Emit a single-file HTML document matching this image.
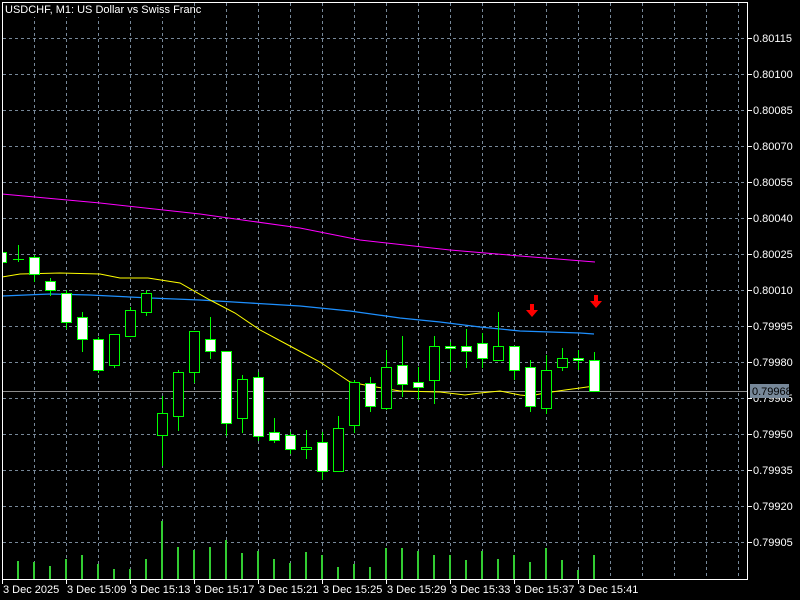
<!DOCTYPE html>
<html><head><meta charset="utf-8"><style>
html,body{margin:0;padding:0;background:#000;width:800px;height:600px;overflow:hidden}
svg{display:block}
text{font-family:"Liberation Sans",sans-serif;font-size:11px;fill:#fff}
</style></head><body>
<svg width="800" height="600" viewBox="0 0 800 600" xmlns="http://www.w3.org/2000/svg">
<rect width="800" height="600" fill="#000"/>
<g stroke="#778899" stroke-width="1" stroke-dasharray="3,3" shape-rendering="crispEdges">
<path d="M34.5 3V579M66.5 3V579M98.5 3V579M130.5 3V579M162.5 3V579M194.5 3V579M226.5 3V579M258.5 3V579M290.5 3V579M322.5 3V579M354.5 3V579M386.5 3V579M418.5 3V579M450.5 3V579M482.5 3V579M514.5 3V579M546.5 3V579M578.5 3V579M610.5 3V579M642.5 3V579M674.5 3V579M706.5 3V579M738.5 3V579"/>
<path d="M3 38.5H747M3 74.5H747M3 110.5H747M3 146.5H747M3 182.5H747M3 218.5H747M3 254.5H747M3 290.5H747M3 326.5H747M3 362.5H747M3 398.5H747M3 434.5H747M3 470.5H747M3 506.5H747M3 542.5H747"/>
</g>
<rect x="4" y="3" width="178" height="14" fill="#000"/>
<text x="5" y="13">USDCHF, M1:  US Dollar vs Swiss Franc</text>
<g fill="#32cd32" shape-rendering="crispEdges">
<rect x="17" y="561" width="2" height="18"/><rect x="33" y="562" width="2" height="17"/><rect x="49" y="566" width="2" height="13"/><rect x="65" y="559" width="2" height="20"/><rect x="81" y="555" width="2" height="24"/><rect x="97" y="564" width="2" height="15"/><rect x="113" y="569" width="2" height="10"/><rect x="129" y="569" width="2" height="10"/><rect x="145" y="559" width="2" height="20"/><rect x="161" y="521" width="2" height="58"/><rect x="177" y="547" width="2" height="32"/><rect x="193" y="550" width="2" height="29"/><rect x="209" y="547" width="2" height="32"/><rect x="225" y="540" width="2" height="39"/><rect x="241" y="553" width="2" height="26"/><rect x="257" y="551" width="2" height="28"/><rect x="273" y="559" width="2" height="20"/><rect x="289" y="563" width="2" height="16"/><rect x="305" y="552" width="2" height="27"/><rect x="321" y="555" width="2" height="24"/><rect x="337" y="567" width="2" height="12"/><rect x="353" y="564" width="2" height="15"/><rect x="369" y="567" width="2" height="12"/><rect x="385" y="548" width="2" height="31"/><rect x="401" y="548" width="2" height="31"/><rect x="417" y="551" width="2" height="28"/><rect x="433" y="555" width="2" height="24"/><rect x="449" y="555" width="2" height="24"/><rect x="465" y="560" width="2" height="19"/><rect x="481" y="551" width="2" height="28"/><rect x="497" y="559" width="2" height="20"/><rect x="513" y="555" width="2" height="24"/><rect x="529" y="562" width="2" height="17"/><rect x="545" y="548" width="2" height="31"/><rect x="561" y="560" width="2" height="19"/><rect x="577" y="570" width="2" height="9"/><rect x="593" y="555" width="2" height="24"/>
</g>
<path d="M3 391.5H747" stroke="#8c8c8c" stroke-width="1" shape-rendering="crispEdges"/>
<polyline fill="none" stroke="#ff00ff" stroke-width="1" points="2,194 100,203 200,214 300,228 360,240 450,250 520,256 595,262"/>
<polyline fill="none" stroke="#1e90ff" stroke-width="1.3" points="2,296 50,294 90,295 150,298 200,300 250,303 300,306 350,311 400,318 440,322 480,327 520,331 580,333 594,334"/>
<polyline fill="none" stroke="#ffff00" stroke-width="1" points="2,277 20,274 60,273 100,274 120,278 148,278 180,283 210,300 235,313 260,330 290,346 320,362 350,382 370,386 400,391 440,392 465,395 480,393 500,391 520,395 530,396 545,393 565,390 580,388 594,386"/>
<g stroke="#00ff00" stroke-width="1" shape-rendering="crispEdges">
<path d="M18.5 245V262M34.5 255V282M50.5 278V296M66.5 290V329M82.5 312V352M98.5 337V373M114.5 334V368M130.5 307V336M146.5 290V316M162.5 396V466M178.5 370V431M194.5 331V383M210.5 317V359M226.5 351V436M242.5 375V433M258.5 372V441M274.5 418V443M290.5 432V454M306.5 430V459M322.5 432V480M338.5 416V471M354.5 380V433M370.5 377V412M386.5 350V410M402.5 336V397M418.5 367V400M434.5 336V404M450.5 342V371M466.5 329V368M482.5 333V368M498.5 312V360M514.5 346V380M530.5 360V412M546.5 355V414M562.5 348V371M578.5 350V370M594.5 352V391"/>
<path d="M13 259.5H24"/>
<g fill="#fff">
<rect x="-3.5" y="252.5" width="10" height="10"/>
<rect x="29.5" y="257.5" width="10" height="17"/>
<rect x="45.5" y="281.5" width="10" height="9"/>
<rect x="61.5" y="293.5" width="10" height="29"/>
<rect x="77.5" y="317.5" width="10" height="22"/>
<rect x="93.5" y="339.5" width="10" height="31"/>
<rect x="205.5" y="339.5" width="10" height="12"/>
<rect x="221.5" y="351.5" width="10" height="72"/>
<rect x="253.5" y="377.5" width="10" height="59"/>
<rect x="269.5" y="432.5" width="10" height="8"/>
<rect x="285.5" y="435.5" width="10" height="14"/>
<rect x="317.5" y="442.5" width="10" height="29"/>
<rect x="365.5" y="383.5" width="10" height="23"/>
<rect x="397.5" y="365.5" width="10" height="19"/>
<rect x="413.5" y="382.5" width="10" height="5"/>
<rect x="445.5" y="346.5" width="10" height="2"/>
<rect x="461.5" y="346.5" width="10" height="5"/>
<rect x="477.5" y="343.5" width="10" height="15"/>
<rect x="509.5" y="346.5" width="10" height="24"/>
<rect x="525.5" y="367.5" width="10" height="39"/>
<rect x="573.5" y="358.5" width="10" height="2"/>
<rect x="589.5" y="360.5" width="10" height="31"/>
</g>
<g fill="#000">
<rect x="109.5" y="334.5" width="10" height="31"/>
<rect x="125.5" y="310.5" width="10" height="26"/>
<rect x="141.5" y="293.5" width="10" height="19"/>
<rect x="157.5" y="413.5" width="10" height="22"/>
<rect x="173.5" y="372.5" width="10" height="44"/>
<rect x="189.5" y="331.5" width="10" height="41"/>
<rect x="237.5" y="379.5" width="10" height="39"/>
<rect x="301.5" y="447.5" width="10" height="2"/>
<rect x="333.5" y="428.5" width="10" height="43"/>
<rect x="349.5" y="382.5" width="10" height="43"/>
<rect x="381.5" y="367.5" width="10" height="41"/>
<rect x="429.5" y="346.5" width="10" height="34"/>
<rect x="493.5" y="346.5" width="10" height="14"/>
<rect x="541.5" y="370.5" width="10" height="38"/>
<rect x="557.5" y="358.5" width="10" height="9"/>
</g>
</g>
<rect x="0" y="240" width="2" height="40" fill="#000"/>
<g fill="#ff0000">
<path d="M530 304h4v6h4l-6 7l-6-7h4z"/>
<path d="M594 295h4v6h4l-6 7l-6-7h4z"/>
</g>
<g stroke="#fff" stroke-width="1" fill="none" shape-rendering="crispEdges">
<path d="M2.5 2.5H747.5V579.5H2.5Z"/>
<path d="M748 38.5h4M748 74.5h4M748 110.5h4M748 146.5h4M748 182.5h4M748 218.5h4M748 254.5h4M748 290.5h4M748 326.5h4M748 362.5h4M748 398.5h4M748 434.5h4M748 470.5h4M748 506.5h4M748 542.5h4"/>
<path d="M2.5 580v4M66.5 580v4M130.5 580v4M194.5 580v4M258.5 580v4M322.5 580v4M386.5 580v4M450.5 580v4M514.5 580v4M578.5 580v4"/>
</g>
<g>
<text x="753" y="42">0.80115</text><text x="753" y="78">0.80100</text><text x="753" y="114">0.80085</text><text x="753" y="150">0.80070</text><text x="753" y="186">0.80055</text><text x="753" y="222">0.80040</text><text x="753" y="258">0.80025</text><text x="753" y="294">0.80010</text><text x="753" y="330">0.79995</text><text x="753" y="366">0.79980</text><text x="753" y="402">0.79965</text><text x="753" y="438">0.79950</text><text x="753" y="474">0.79935</text><text x="753" y="510">0.79920</text><text x="753" y="546">0.79905</text>
</g>
<rect x="750" y="384" width="39" height="14" fill="#778899"/>
<text x="752" y="395" style="fill:#000">0.79968</text>
<g>
<text x="3" y="593">3 Dec 2025</text><text x="67" y="593">3 Dec 15:09</text><text x="131" y="593">3 Dec 15:13</text><text x="195" y="593">3 Dec 15:17</text><text x="259" y="593">3 Dec 15:21</text><text x="323" y="593">3 Dec 15:25</text><text x="387" y="593">3 Dec 15:29</text><text x="451" y="593">3 Dec 15:33</text><text x="515" y="593">3 Dec 15:37</text><text x="579" y="593">3 Dec 15:41</text>
</g>
</svg>
</body></html>
